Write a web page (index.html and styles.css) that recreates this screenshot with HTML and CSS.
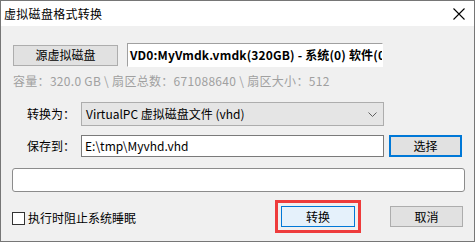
FILE: index.html
```html
<!DOCTYPE html>
<html>
<head>
<meta charset="utf-8">
<link rel="stylesheet" href="styles.css">
</head>
<body>
<div class="window">
  <div class="titlebar">
    <span class="title">虚拟磁盘格式转换</span>
    <svg class="close" width="12" height="12" viewBox="0 0 12 12"><path d="M0.5 0.5 L11.5 11.5 M11.5 0.5 L0.5 11.5" stroke="#000" stroke-width="1.1" fill="none"/></svg>
  </div>
  <div class="content">
    <div class="row1">
      <div class="btn src">源虚拟磁盘</div>
      <div class="srcfield">VD0:MyVmdk.vmdk(320GB) - 系统(0) 软件(0)</div>
    </div>
    <div class="info">容量：320.0 GB \ 扇区总数：671088640 \ 扇区大小：512</div>
    <div class="formrow combo-row">
      <span class="label">转换为：</span>
      <div class="combo">
        <span>VirtualPC 虚拟磁盘文件 (vhd)</span>
        <svg class="chev" width="9" height="5" viewBox="0 0 9 5"><path d="M0.5 0.5 L4.5 4.5 L8.5 0.5" stroke="#606060" stroke-width="1" fill="none"/></svg>
      </div>
    </div>
    <div class="formrow save-row">
      <span class="label">保存到：</span>
      <div class="input">E:\tmp\Myvhd.vhd</div>
      <div class="btn choose">选择</div>
    </div>
    <div class="progress"></div>
    <div class="bottom">
      <label class="check"><span class="box"></span><span>执行时阻止系统睡眠</span></label>
      <div class="highlight"><div class="btn convert">转换</div></div>
      <div class="btn cancel">取消</div>
    </div>
  </div>
</div>
</body>
</html>
```
FILE: styles.css
```css
* { box-sizing: border-box; }
html, body { margin: 0; padding: 0; }
body {
  font-family: "Noto Sans CJK SC", "Noto Sans", sans-serif;
  font-size: 12px;
  color: #000;
  background: #f0f0f0;
}
.window {
  width: 475px;
  height: 242px;
  border: 1px solid #767676;
  background: #f0f0f0;
  display: flex;
  flex-direction: column;
}
.titlebar {
  height: 25px;
  background: #fff;
  display: flex;
  align-items: center;
  justify-content: space-between;
  padding: 0 9px 0 3px;
  flex: none;
}
.title { font-size: 12px; line-height: 16px; letter-spacing: 0.3px; }
.close { display: block; }
.content {
  padding: 0 10px 0 11px;
  display: flex;
  flex-direction: column;
}
.btn {
  background: #e1e1e1;
  border: 1px solid #adadad;
  display: flex;
  align-items: center;
  justify-content: center;
  line-height: 16px;
}
.row1 {
  margin-top: 17px;
  height: 24px;
  display: flex;
  align-items: center;
}
.src { width: 105px; height: 21px; margin-left: 1px; }
.srcfield {
  margin-left: 9px;
  width: 256px;
  height: 24px;
  background: #fff;
  border-top: 1px solid #a0a0a0;
  border-left: 1px solid #a0a0a0;
  border-right: 1px solid #fff;
  border-bottom: 1px solid #fff;
  font-weight: bold;
  white-space: nowrap;
  overflow: hidden;
  padding: 0 0 0 2px;
  line-height: 22px;
  font-size: 12px;
  letter-spacing: 0.15px;
}
.info {
  margin-top: 6px;
  margin-left: 1px;
  color: #a0a0a0;
  line-height: 16px;
  height: 16px;
  letter-spacing: 0.3px;
}
.formrow {
  display: flex;
  align-items: center;
}
.label {
  flex: none;
  width: 69px;
  padding-left: 15px;
  line-height: 16px;
}
.combo-row { margin-top: 13px; height: 24px; }
.combo {
  width: 303px;
  height: 24px;
  background: #e5e5e5;
  border: 1px solid #adadad;
  display: flex;
  align-items: center;
  justify-content: space-between;
  padding: 0 6px 0 4px;
  line-height: 16px;
}
.chev { display: block; }
.save-row { margin-top: 9px; height: 22px; }
.input {
  width: 303px;
  height: 22px;
  background: #fff;
  border: 1px solid #7a7a7a;
  padding-left: 3px;
  line-height: 20px;
}
.choose {
  margin-left: 5px;
  width: 73px;
  height: 22px;
  border: 2px solid #0078d7;
}
.progress {
  margin-top: 11px;
  width: 453px;
  height: 24px;
  background: #fff;
  border: 1px solid #8c8c8c;
  border-radius: 3px;
}
.bottom {
  margin-top: 8px;
  height: 33px;
  display: flex;
  align-items: center;
}
.check {
  display: flex;
  align-items: center;
  gap: 3px;
  line-height: 16px;
  margin-right: auto;
  margin-top: 3px;
}
.box {
  width: 13px;
  height: 13px;
  border: 1px solid #333;
  background: #fff;
}
.highlight {
  border: 3px solid #ee3b3b;
  padding: 3px;
  width: 86px;
  height: 33px;
}
.convert {
  width: 74px;
  height: 21px;
  background: #e5f1fb;
  border: 1px solid #0078d7;
}
.cancel {
  margin-left: 29px;
  width: 73px;
  height: 21px;
  margin-right: 1px;
}
```
